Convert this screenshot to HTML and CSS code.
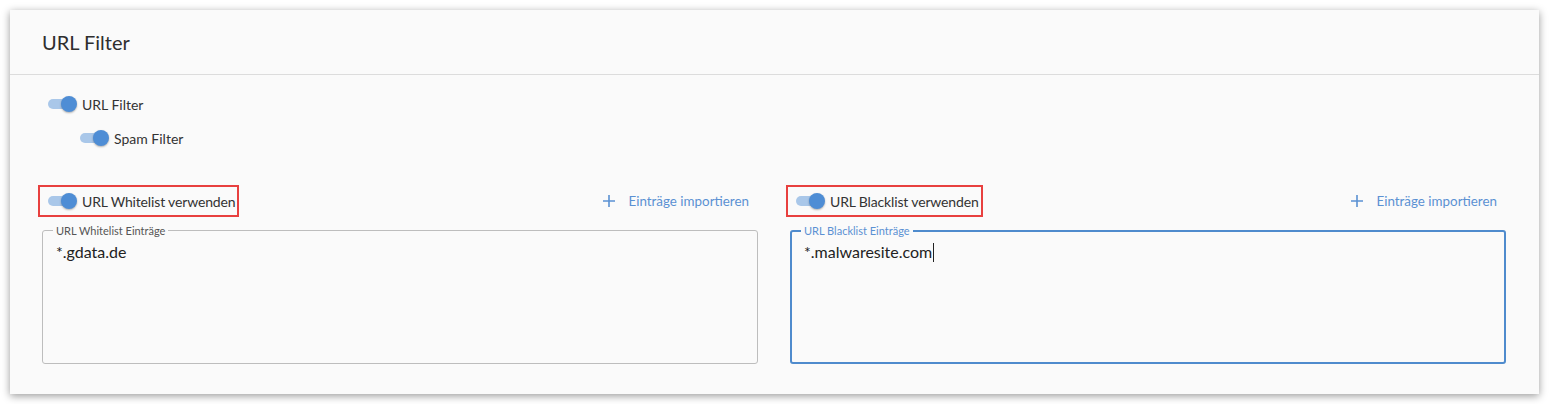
FILE: index.html
```html
<!DOCTYPE html>
<html lang="de">
<head>
    <meta charset="UTF-8">
    <title>URL Filter</title>
    <link rel="stylesheet" href="styles.css">
</head>
<body>
    <div class="card">
        <div class="card-header">URL Filter</div>

        <div class="card-body">
            <div class="switch-row">
                <span class="switch"><span class="track"></span><span class="knob"></span></span>
                <span class="switch-label">URL Filter</span>
            </div>
            <div class="switch-row sub">
                <span class="switch"><span class="track"></span><span class="knob"></span></span>
                <span class="switch-label">Spam Filter</span>
            </div>

            <div class="lists">
                <div class="list-col">
                    <div class="list-head">
                        <div class="switch-row marked">
                            <span class="switch"><span class="track"></span><span class="knob"></span></span>
                            <span class="switch-label">URL Whitelist verwenden</span>
                        </div>
                        <a class="import-btn">
                            <svg class="plus" width="12" height="12" viewBox="0 0 12 12"><path d="M6 0v12M0 6h12" stroke="currentColor" stroke-width="1.6"/></svg>
                            Einträge importieren
                        </a>
                    </div>
                    <fieldset class="entries">
                        <legend>URL Whitelist Einträge</legend>
                        <div class="entries-text">*.gdata.de</div>
                    </fieldset>
                </div>

                <div class="list-col">
                    <div class="list-head">
                        <div class="switch-row marked">
                            <span class="switch"><span class="track"></span><span class="knob"></span></span>
                            <span class="switch-label">URL Blacklist verwenden</span>
                        </div>
                        <a class="import-btn">
                            <svg class="plus" width="12" height="12" viewBox="0 0 12 12"><path d="M6 0v12M0 6h12" stroke="currentColor" stroke-width="1.6"/></svg>
                            Einträge importieren
                        </a>
                    </div>
                    <fieldset class="entries focused">
                        <legend>URL Blacklist Einträge</legend>
                        <div class="entries-text">*.malwaresite.com<span class="caret"></span></div>
                    </fieldset>
                </div>
            </div>
        </div>
    </div>
</body>
</html>
```

FILE: styles.css
```css
* {
    margin: 0;
    padding: 0;
    box-sizing: border-box;
}

body {
    background-color: #ffffff;
    padding: 10px;
    font-family: 'Lato', 'Noto Sans', sans-serif;
    color: #333333;
}

.card {
    width: 1529px;
    height: 384px;
    background-color: #fafafa;
    box-shadow: 0 2px 8px rgba(0, 0, 0, 0.4);
}

.card-header {
    height: 65px;
    padding-left: 32px;
    display: flex;
    align-items: center;
    font-size: 20px;
    color: #2e2e2e;
    border-bottom: 1px solid #dcdcdc;
    padding-bottom: 1px;
}

.card-body {
    padding: 17px 33px 0 32px;
}

.switch-row {
    display: flex;
    align-items: center;
    height: 24px;
    font-size: 14px;
}

.switch-row.sub {
    margin-top: 10px;
    padding-left: 32px;
}

.switch {
    position: relative;
    width: 36px;
    height: 18px;
    margin-right: 4px;
    flex-shrink: 0;
}

.track {
    position: absolute;
    left: 6px;
    top: 4px;
    width: 28px;
    height: 10px;
    border-radius: 5px;
    background-color: #a9c7e9;
}

.knob {
    position: absolute;
    left: 19px;
    top: 1px;
    width: 16px;
    height: 16px;
    border-radius: 50%;
    background-color: #4e8dd5;
    box-shadow: 0 1px 2px rgba(0, 0, 0, 0.3);
}

.lists {
    display: flex;
    gap: 32px;
    margin-top: 39px;
}

.list-col {
    flex: 1;
}

.list-head {
    display: flex;
    justify-content: space-between;
    align-items: center;
    height: 24px;
}

.switch-row.marked {
    outline: 2px solid #e8403f;
    outline-offset: 2px;
    letter-spacing: -0.15px;
}

.import-btn {
    display: flex;
    align-items: center;
    color: #5b91d3;
    font-size: 13.4px;
    margin-right: 9px;
}

.plus {
    margin-right: 13px;
}

.entries {
    margin-top: 11px;
    height: 140px;
    border: 1px solid #bdbdbd;
    border-radius: 3px;
    padding: 0 13px;
}

.entries legend {
    font-size: 11px;
    color: #555555;
    padding: 0 3px;
    margin-left: -3px;
}

.entries-text {
    font-size: 16px;
    line-height: 20px;
    color: #222222;
    margin-top: 5px;
}

.entries.focused {
    border: 2px solid #4f8bcd;
    padding: 0 12px;
}

.entries.focused legend {
    color: #5b91d3;
}

.caret {
    display: inline-block;
    width: 1px;
    height: 19px;
    background-color: #222222;
    vertical-align: -4px;
    margin-left: 1px;
}
```
